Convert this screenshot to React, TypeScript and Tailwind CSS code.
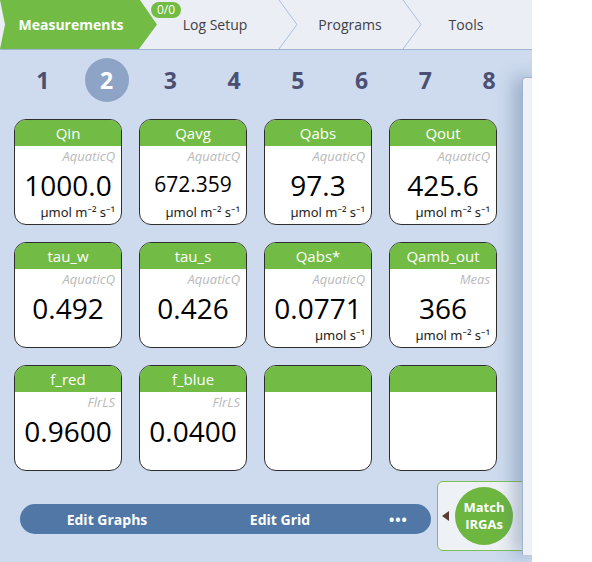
import React from 'react';

type Cell = {
  name?: string;
  source?: string;
  value?: string;
  unit?: string;
  small?: boolean;
};

const cells: Cell[] = [
  { name: 'Qin', source: 'AquaticQ', value: '1000.0', unit: 'µmol m⁻² s⁻¹' },
  { name: 'Qavg', source: 'AquaticQ', value: '672.359', unit: 'µmol m⁻² s⁻¹', small: true },
  { name: 'Qabs', source: 'AquaticQ', value: '97.3', unit: 'µmol m⁻² s⁻¹' },
  { name: 'Qout', source: 'AquaticQ', value: '425.6', unit: 'µmol m⁻² s⁻¹' },
  { name: 'tau_w', source: 'AquaticQ', value: '0.492' },
  { name: 'tau_s', source: 'AquaticQ', value: '0.426' },
  { name: 'Qabs*', source: 'AquaticQ', value: '0.0771', unit: 'µmol s⁻¹' },
  { name: 'Qamb_out', source: 'Meas', value: '366', unit: 'µmol m⁻² s⁻¹' },
  { name: 'f_red', source: 'FlrLS', value: '0.9600' },
  { name: 'f_blue', source: 'FlrLS', value: '0.0400' },
  {},
  {},
];

function Chevron() {
  return (
    <svg className="absolute right-0 top-0 h-[49px] w-[20px]" viewBox="0 0 20 49">
      <polyline points="1,0 19,24.5 1,49" fill="none" stroke="#a8bfdc" strokeWidth="1" />
    </svg>
  );
}

function Card({ cell }: { cell: Cell }) {
  return (
    <div className="h-[106px] overflow-hidden rounded-[12px] border-[1.5px] border-[#2e2e2e] bg-white">
      <div className="flex h-[26px] items-center justify-center bg-[#72bb44] text-[15px] font-medium text-white">
        {cell.name}
      </div>
      <div className="h-[20px] pr-[6px] text-right text-[13px] italic leading-[20px] text-[#b9b9b9]">
        {cell.source}
      </div>
      <div
        className={
          cell.small
            ? 'flex h-[38px] items-center justify-center text-[21px] font-medium text-black'
            : 'flex h-[38px] items-center justify-center text-[28px] font-medium text-black'
        }
      >
        {cell.value}
      </div>
      <div
        className="h-[16px] pr-[6px] text-right text-[13px] leading-[16px] text-[#222]"
        style={{ fontFamily: '"Noto Sans", "DejaVu Sans", sans-serif' }}
      >
        {cell.unit}
      </div>
    </div>
  );
}

export default function App() {
  return (
    <div className="h-[562px] w-[592px] bg-white" style={{ fontFamily: '"Open Sans", "Noto Sans", sans-serif' }}>
      <div className="relative h-[562px] w-[532px] overflow-hidden bg-[#cedbee]">
        {/* top nav */}
        <div className="flex h-[50px] border-b border-[#9fb5d4] bg-[#eceef6]">
          <div
            className="flex w-[157px] items-center justify-center bg-[#72bb44] pr-[15px] text-[14px] font-bold text-white"
            style={{ clipPath: 'polygon(0 0, 140px 0, 157px 50%, 139px 100%, 0 100%, 5px 50%)' }}
          >
            Measurements
          </div>
          <div className="relative flex w-[141px] items-center justify-center pr-[25px] text-[14px] font-medium text-[#404146]">
            <span className="absolute left-[-6px] top-[2px] rounded-full bg-[#72bb44] px-[6px] text-[12px] font-medium leading-[16px] text-white">
              0/0
            </span>
            Log Setup
            <Chevron />
          </div>
          <div className="relative flex w-[124px] items-center justify-center pr-[20px] text-[14px] font-medium text-[#404146]">
            Programs
            <Chevron />
          </div>
          <div className="flex w-[110px] items-center justify-center pr-[22px] text-[14px] font-medium text-[#404146]">
            Tools
          </div>
        </div>

        {/* page numbers */}
        <div className="flex px-[11px] pt-[8px]">
          {[1, 2, 3, 4, 5, 6, 7, 8].map((n) => (
            <div key={n} className="flex h-[44px] w-[64px] items-center justify-center">
              <div
                className={
                  n === 2
                    ? 'flex h-[44px] w-[44px] items-center justify-center rounded-full bg-[#8ea4c7] text-[23px] font-bold text-white'
                    : 'flex h-[44px] w-[44px] items-center justify-center text-[23px] font-bold text-[#4b5072]'
                }
              >
                {n}
              </div>
            </div>
          ))}
        </div>

        {/* grid */}
        <div className="ml-[14px] mt-[17px] grid grid-cols-[repeat(4,108px)] gap-x-[17px] gap-y-[17px]">
          {cells.map((c, i) => (
            <Card key={i} cell={c} />
          ))}
        </div>

        {/* bottom row */}
        <div className="mt-[10px] flex items-start">
          <div className="ml-[20px] mt-[23px] flex h-[30px] w-[411px] items-center rounded-full bg-[#5177a6] text-[14px] font-bold text-white">
            <div className="w-[174px] text-center">Edit Graphs</div>
            <div className="w-[172px] text-center">Edit Grid</div>
            <div className="w-[65px] text-center tracking-[1px]">•••</div>
          </div>
          <div className="ml-[6px] flex h-[70px] w-[100px] items-center rounded-[6px] border border-[#7cc053] bg-[#eef1f6]">
            <div className="ml-[4px] h-0 w-0 border-y-[5px] border-r-[7px] border-y-transparent border-r-[#5b3b31]" />
            <div className="ml-[6px] flex h-[58px] w-[58px] flex-col items-center justify-center rounded-full bg-[#6db640] text-[13px] font-bold leading-[17px] text-white">
              <span>Match</span>
              <span>IRGAs</span>
            </div>
          </div>
        </div>

        {/* side drawer overlay */}
        <div className="absolute bottom-[7px] left-[522px] top-[77px] w-[20px] rounded-tl-[4px] border-l border-t border-[#9fb3cf] bg-[#eef1f7] shadow-[-8px_0_18px_rgba(70,100,140,0.4)]" />
      </div>
    </div>
  );
}
